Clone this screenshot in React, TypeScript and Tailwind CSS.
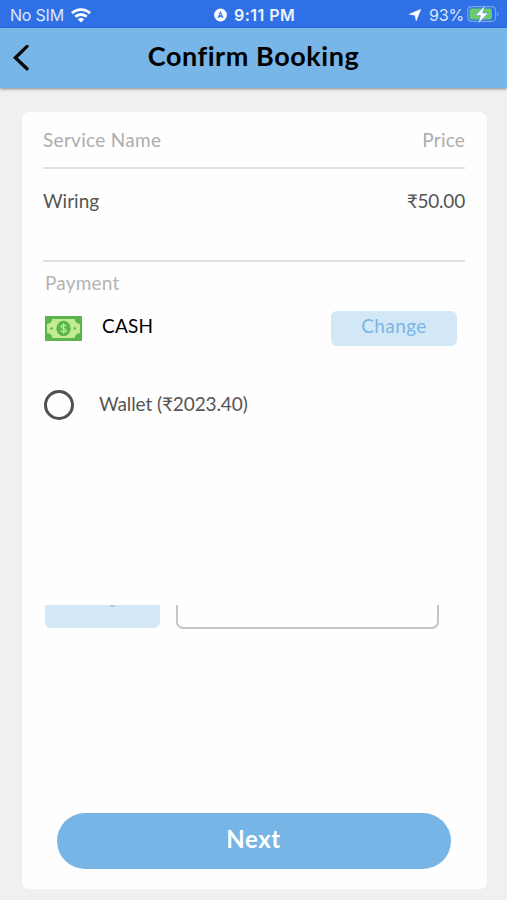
function WifiIcon() {
  return (
    <svg className="ml-[7px] h-[15px] w-5" viewBox="0 0 20 15" fill="none" stroke="#fff" strokeWidth="2.9">
      <path d="M1 5.2a13 13 0 0 1 18 0" />
      <path d="M4.3 8.7a8.3 8.3 0 0 1 11.4 0" />
      <path d="M10 14.6 6.7 11.3a4.8 4.8 0 0 1 6.6 0Z" fill="#fff" stroke="none" />
    </svg>
  );
}

function BatteryIcon() {
  return (
    <svg className="h-5 w-[33px]" viewBox="0 0 33 20">
      <rect x="0.6" y="1.6" width="28" height="14.8" rx="4" fill="none" stroke="#7da6e6" strokeWidth="1.2" />
      <path d="M30.3 7v4.4c1.8-.7 1.8-3.7 0-4.4Z" fill="#7da6e6" />
      <rect x="2.4" y="3.5" width="22.5" height="11" rx="2.2" fill="#6acb6b" />
      <path d="M18 .5 8.4 10.500h5.200l-2.400 8L21.200 8h-5.600Z" fill="#fff" stroke="#3572e6" strokeWidth="0.4" />
    </svg>
  );
}

function StatusBar() {
  return (
    <div className="grid h-7 grid-cols-[214px_1fr_98px] items-center bg-[#2f70e6] pt-[2px] font-['Inter',sans-serif] text-white">
      <div className="flex items-center pl-[10px]">
        <span className="w-[54px] text-[16px] tracking-[-0.2px] whitespace-nowrap text-[#dce8fb]">No SIM</span>
        <WifiIcon />
      </div>
      <div className="flex items-center">
        <svg className="h-[14px] w-[13px]" viewBox="0 0 13 14">
          <circle cx="6.5" cy="7" r="6.4" fill="#fff" />
          <path d="M6.5 2.8 9.6 10.200 6.5 8.700 3.400 10.200Z" fill="#2f70e6" />
          <path d="M6.5 5.4 7.3 7.6 6.5 7.2 5.7 7.6Z" fill="#fff" />
        </svg>
        <span className="ml-[7px] text-[16px] font-semibold tracking-[0.45px] whitespace-nowrap text-[#eef4fe]">9:11 PM</span>
      </div>
      <div className="flex items-center">
        <svg className="h-3 w-3" viewBox="0 0 12 12">
          <path d="M11.8.3 7.200 11.800 6 6.2 0.200 5.2Z" fill="#fff" stroke="#fff" strokeWidth="0.5" />
        </svg>
        <span className="ml-2 w-[38px] text-[16px] tracking-[-0.2px] whitespace-nowrap text-[#dce8fb]">93%</span>
        <BatteryIcon />
      </div>
    </div>
  );
}

function Header() {
  return (
    <header className="grid h-[60px] grid-cols-[60px_1fr_60px] items-center bg-[#78b6e7] shadow-[0_1px_3px_rgba(0,0,0,0.45)]">
      <svg className="mb-[2px] ml-[13px] h-[27px] w-[17px]" viewBox="0 0 17 27" fill="none" stroke="#080808" strokeWidth="3.3" strokeLinecap="round">
        <path d="M14 2.400 2.400 13.700 14 24.800" />
      </svg>
      <h1 className="pb-[5px] text-center text-[27px] leading-8 font-bold tracking-[0.55px] whitespace-nowrap text-black">Confirm Booking</h1>
    </header>
  );
}

function CashIcon() {
  return (
    <svg className="h-[25px] w-[37px]" viewBox="0 0 36 25" preserveAspectRatio="none">
      <rect width="36" height="25" fill="#59b54c" />
      <path d="M7 3h22c0 2.8 2 4.8 5 5v9c-3 .2-5 2.200-5 5H7c0-2.800-2-4.800-5-5V8c3-.2 5-2.200 5-5Z" fill="#c3ec91" />
      <ellipse cx="18" cy="12.500" rx="7" ry="7.700" fill="#59b54c" />
      <circle cx="6.400" cy="12.500" r="1.200" fill="#59b54c" />
      <circle cx="29" cy="12.500" r="1.200" fill="#59b54c" />
      <path d="M20.600 10.200c-.5-1.300-4.700-1.700-4.900.4-.2 2.200 5 1.500 4.900 3.800-.1 2-4.400 1.900-5.300.1M18.100 7.300v10.400" fill="none" stroke="#c3ec91" strokeWidth="1.200" />
    </svg>
  );
}

export default function App() {
  return (
    <div className="flex h-[900px] w-full flex-col overflow-hidden bg-[#f0f0f0] font-['Lato',sans-serif] text-[#555]">
      <StatusBar />
      <Header />
      <main className="mt-6 ml-[22px] flex h-[777px] w-[465px] flex-col rounded-[7px] bg-[#fefefe] text-[19px]">
        <section className="ml-[21px] w-[422px]">
          <div className="flex h-[57px] items-center justify-between border-b-2 border-[#e0e0e0] pt-[2px] text-[#adadad]">
            <span className="tracking-[0.3px]">Service Name</span>
            <span className="tracking-[0.2px]">Price</span>
          </div>
          <div className="flex h-[93px] items-start justify-between border-b-2 border-[#e0e0e0] pt-[18px]">
            <span>Wiring</span>
            <span className="tracking-[-0.2px]">₹50.00</span>
          </div>
        </section>
        <section className="flex flex-col pl-[23px]">
          <h2 className="mt-[7px] h-7 leading-7 tracking-[0.2px] text-[#b4b4b4]">Payment</h2>
          <div className="mt-[13px] flex h-[36px] w-[412px] items-center">
            <CashIcon />
            <span className="ml-5 flex-1 pb-[4px] tracking-[0.2px] text-black">CASH</span>
            <button className="h-[35px] w-[126px] rounded-[6px] bg-[#d3e8f6] pb-[4px] tracking-[0.4px] text-[#79b5e6]">Change</button>
          </div>
          <div className="mt-[44px] flex h-[30px] items-center">
            <span className="-ml-px size-[30px] rounded-full border-[3px] border-[#505050]" />
            <span className="ml-[25px] pb-px tracking-[-0.1px]">Wallet (₹2023.40)</span>
          </div>
        </section>
        <section className="mt-[185px] flex h-6 items-start pl-[23px]">
          <div className="flex h-[23px] w-[115px] justify-center rounded-b-[6px] bg-[#d3e8f6] pl-[20px]">
            <span className="h-[2px] w-[5px] rounded-b-full bg-[#9fc9d8]" />
          </div>
          <div className="ml-4 h-6 w-[263px] rounded-b-[7px] border-2 border-t-0 border-[#c5c5c5]" />
        </section>
        <button className="mt-auto mb-[20px] ml-[35px] h-[56px] w-[394px] rounded-full bg-[#76b5e6] pr-px pb-[4px] text-[24px] font-bold tracking-[0.6px] text-white">Next</button>
      </main>
    </div>
  );
}
